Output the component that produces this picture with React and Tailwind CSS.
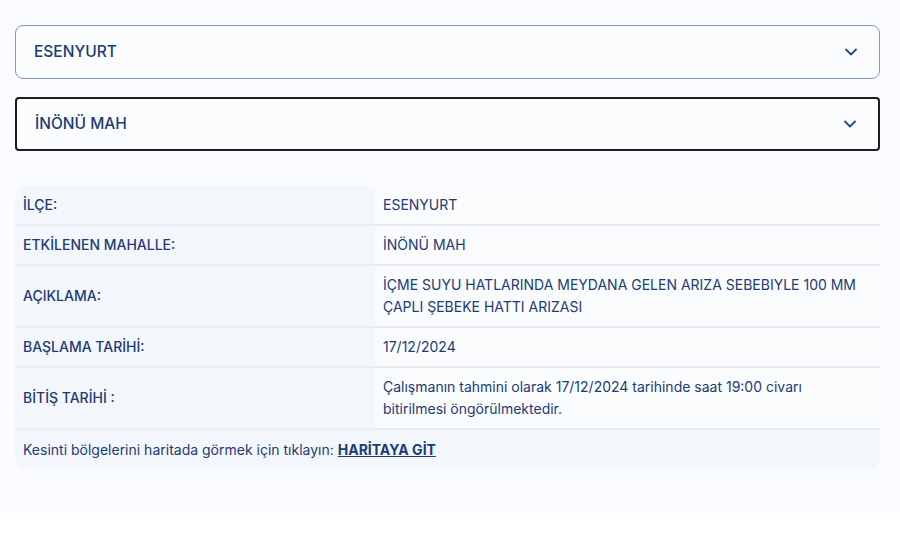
import React from 'react';
import { ChevronDown } from 'lucide-react';

const rows = [
  { label: 'İLÇE:', value: 'ESENYURT' },
  { label: 'ETKİLENEN MAHALLE:', value: 'İNÖNÜ MAH' },
  { label: 'AÇIKLAMA:', value: 'İÇME SUYU HATLARINDA MEYDANA GELEN ARIZA SEBEBIYLE 100 MM ÇAPLI ŞEBEKE HATTI ARIZASI' },
  { label: 'BAŞLAMA TARİHİ:', value: '17/12/2024' },
  {
    label: 'BİTİŞ TARİHİ :',
    value: 'Çalışmanın tahmini olarak 17/12/2024 tarihinde saat 19:00 civarı bitirilmesi öngörülmektedir.',
  },
];

const Select = ({ value, focused }) => (
  <div
    className={`h-[54px] flex items-center justify-between pl-[18px] pr-[18px] bg-[#fafcfe] ${
      focused ? 'border-2 border-[#1e1e1e] rounded-[4px]' : 'border border-[#7f9bc4] rounded-lg'
    }`}
  >
    <span className="text-[15.5px] text-[#1d3c74] font-medium">{value}</span>
    <ChevronDown size={20} strokeWidth={2.2} className="text-[#1d4a8c]" />
  </div>
);

const App = () => {
  return (
    <div className="bg-white min-h-[536px]" style={{ fontFamily: 'Inter, "Noto Sans", sans-serif' }}>
      <div className="bg-[#f9fbfe] h-[513px] pt-[25px] pl-[15px] pr-[20px]">
        <div className="flex flex-col gap-[18px]">
          <Select value="ESENYURT" />
          <Select value="İNÖNÜ MAH" focused />
        </div>

        <div className="mt-[35px] rounded-xl overflow-hidden text-[#1d3c74] text-[14px] leading-[22px]">
          {rows.map((row) => (
            <div key={row.label} className="grid grid-cols-[360px_1fr] border-b-2 border-[#eaeef3]">
              <div className="bg-[#f3f6fb] flex items-center px-2 py-2 font-medium">{row.label}</div>
              <div className="bg-[#f9fbfd] flex items-center pl-2 pr-5 py-2">{row.value}</div>
            </div>
          ))}
          <div className="bg-[#f3f6fb] px-2 h-[39px] flex items-center">
            <span>Kesinti bölgelerini haritada görmek için tıklayın:&nbsp;</span>
            <a href="#" className="font-bold underline">HARİTAYA GİT</a>
          </div>
        </div>
      </div>
    </div>
  );
};

export default App;
